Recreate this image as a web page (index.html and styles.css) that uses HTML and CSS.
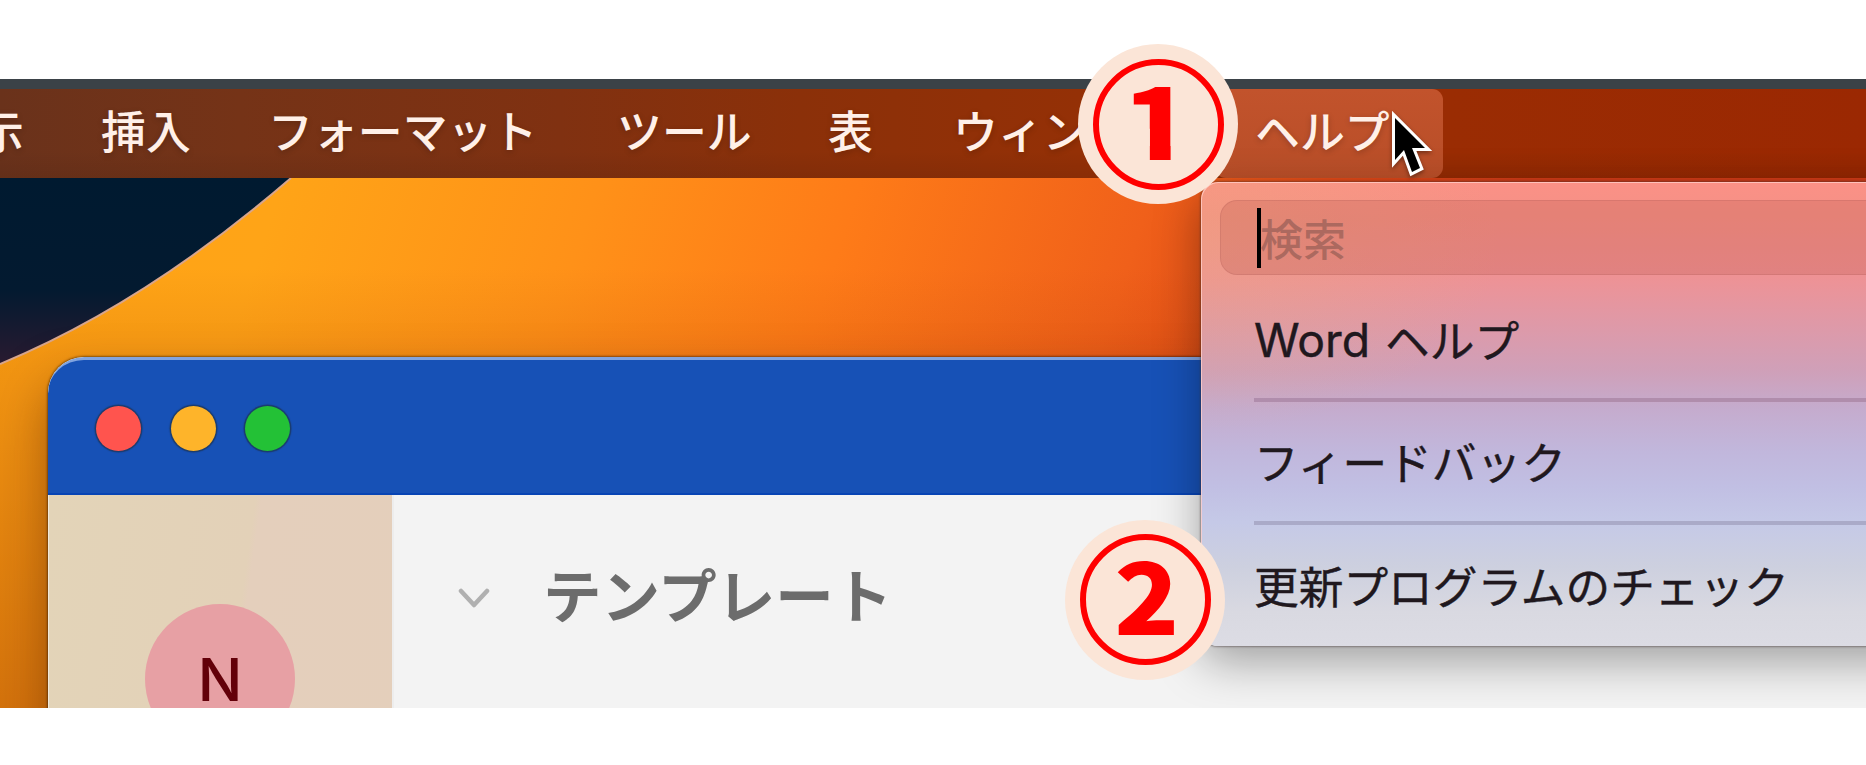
FILE: index.html
```html
<!DOCTYPE html>
<html lang="ja">
<head>
<meta charset="utf-8">
<title>Word ヘルプ</title>
<link rel="stylesheet" href="styles.css">
</head>
<body>
<main class="screen">
  <div class="bezel"></div>
  <nav class="menubar">
    <span class="item item-view">示</span>
    <span class="item item-insert">挿入</span>
    <span class="item item-format">フォーマット</span>
    <span class="item item-tools">ツール</span>
    <span class="item item-table">表</span>
    <span class="item item-window">ウィンドウ</span>
    <span class="item item-help">ヘルプ</span>
  </nav>
  <section class="desktop">
    <svg class="wallpaper" width="1866" height="530" viewBox="0 0 1866 530">
      <defs>
        <linearGradient id="night" x1="0" y1="0" x2="0" y2="186" gradientUnits="userSpaceOnUse">
          <stop offset="0" stop-color="#001a30"/><stop offset=".6" stop-color="#031a30"/><stop offset="1" stop-color="#291a30"/>
        </linearGradient>
      </defs>
      <path d="M0 0H291Q145 126 0 186Z" fill="url(#night)"/>
      <path d="M291 0Q145 126 0 186" fill="none" stroke="#d8a58c" stroke-width="2"/>
    </svg>
    <article class="window">
      <header class="titlebar">
        <i class="light red"></i><i class="light yellow"></i><i class="light green"></i>
      </header>
      <div class="content">
        <aside class="sidebar"><div class="avatar">N</div></aside>
        <div class="pane">
          <svg class="chevron" width="32" height="22" viewBox="0 0 32 22"><path d="M3 3L16 17L29 3" fill="none" stroke="#b0b0b0" stroke-width="4.5" stroke-linecap="round" stroke-linejoin="round"/></svg>
          <h1 class="heading">テンプレート</h1>
        </div>
      </div>
    </article>
  </section>
  <div class="help-menu">
    <div class="search"><i class="caret"></i><span class="placeholder">検索</span></div>
    <div class="entry entry-word"><span class="latin">Word</span>ヘルプ</div>
    <hr class="rule rule-warm">
    <div class="entry entry-feedback">フィードバック</div>
    <hr class="rule">
    <div class="entry entry-update">更新プログラムのチェック</div>
  </div>
</main>
<svg class="pointer" width="56" height="82" viewBox="0 0 56 82">
  <path d="M9 15V57L18 47L26 69L34 65L26 45H39Z" fill="#000" stroke="#fff" stroke-width="6" paint-order="stroke"/>
</svg>
<div class="badge badge-one"><div class="ring"><span class="digit">1</span></div></div>
<div class="badge badge-two"><div class="ring"><span class="digit">2</span></div></div>
</body>
</html>
```
FILE: styles.css
```css
* { box-sizing: border-box; }
body {
  position: relative;
  width: 1866px;
  height: 765px;
  margin: 0;
  padding-top: 79px;
  overflow: hidden;
  background: #fff;
  font-family: "Noto Sans CJK JP", sans-serif;
}
.screen { position: relative; height: 629px; overflow: hidden; }
.bezel { height: 10px; background: #3b4247; }
.menubar {
  display: flex;
  height: 89px;
  background:
    linear-gradient(180deg, rgba(0,0,0,0) 70%, rgba(0,0,0,.07)),
    linear-gradient(90deg, #6a321b 0, #753317 240px, #803111 560px, #8b3009 800px, #943006 1080px, #9a2c03 1450px, #9b2802 1866px);
  color: #fff0e8;
  font-size: 44.9px;
  font-weight: 500;
  line-height: 81px;
  text-shadow: 0 2px 6px rgba(0,0,0,.2);
  white-space: nowrap;
}
.item { flex: none; }
.item-view { width: 101px; margin-left: -21px; }
.item-insert { width: 167px; margin-left: 21px; }
.item-format { width: 349px; }
.item-tools { width: 211px; }
.item-table { width: 125px; }
.item-window { width: 262px; }
.item-help {
  width: 228px;
  padding-left: 40px;
  border-radius: 11px;
  background: linear-gradient(180deg, #c2532c, #b84e28);
}
.desktop {
  position: relative;
  height: 530px;
  background:
    linear-gradient(180deg, rgba(160,55,0,0) 90px, rgba(160,55,0,.13) 180px, rgba(160,55,0,.45) 530px),
    linear-gradient(108deg, #ffa414 0, #ffa417 270px, #ff9118 570px, #fe7b18 820px, #f0601a 1100px, #df4917 1260px, #cd3a16 1450px);
}
.wallpaper { display: block; }
.window {
  position: absolute;
  top: 179px;
  left: 48px;
  width: 1900px;
  height: 500px;
  overflow: hidden;
  border-radius: 36px 0 0 0;
  background: #f3f3f3;
  box-shadow: 0 0 2px 1px rgba(40,20,0,.5), 0 26px 50px rgba(90,35,0,.5);
}
.titlebar {
  display: flex;
  gap: 29.5px;
  height: 138px;
  padding: 46px 0 0 48px;
  border-top: 3px solid #82a4df;
  border-bottom: 2px solid #0844b4;
  border-radius: 36px 0 0 0;
  background: #1751b6;
}
.light {
  width: 45px;
  height: 45px;
  border-radius: 50%;
  box-shadow: 0 0 1px 1.5px rgba(30,45,60,.6);
}
.red { background: #ff544e; }
.yellow { background: #feb42a; }
.green { background: #23c136; }
.content { display: flex; height: 362px; }
.sidebar {
  width: 344px;
  padding: 109px 0 0 96px;
  border-left: 1px solid #f0e8da;
  background: linear-gradient(98deg, #e3d4b8 0, #e3d1b8 205px, #e4cfbc 211px, #e4cfbb 100%);
}
.avatar {
  width: 150px;
  height: 150px;
  border-radius: 50%;
  background: #e7a0a4;
  color: #630009;
  font: 500 59px/152px Inter, sans-serif;
  text-align: center;
}
.pane { display: flex; flex: 1; padding: 60px 0 0 64px; border-left: 2px solid #ededed; }
.chevron { margin-top: 33px; }
.heading {
  margin: -2px 0 0 53px;
  color: #6c6c6c;
  font-size: 58.5px;
  font-weight: 700;
  line-height: 80px;
}
.help-menu {
  position: absolute;
  top: 103px;
  left: 1201px;
  width: 760px;
  height: 464px;
  padding: 18px 19px;
  border-radius: 17px;
  background:
    radial-gradient(ellipse 300px 190px at 0 60px, rgba(235,175,120,.32), rgba(235,160,120,0)),
    linear-gradient(180deg, #fb9186 0, #f49086 35px, #ee9295 95px, #e198a5 135px, #cfa0b9 190px, #c5abcd 225px, #c1b7dc 270px, #c1bfe3 305px, #c5c9e7 340px, #cdd0df 385px, #d9d9e1 430px, #dcdce4 464px);
  box-shadow: inset 1px 1px 0 rgba(255,205,200,.8), 0 0 2px 1px rgba(60,45,45,.45), 0 16px 46px rgba(0,0,0,.34);
  color: #20181e;
  font-size: 44.7px;
  white-space: nowrap;
}
.search {
  display: flex;
  height: 75px;
  padding: 7px 0 0 36px;
  border: 1px solid rgba(170,85,80,.22);
  border-radius: 17px;
  background: rgba(182,82,70,.25);
}
.caret { width: 4px; height: 60px; background: #000; }
.placeholder { margin-left: -1px; color: #ac695f; font-size: 43px; font-weight: 500; line-height: 59px; }
.entry { padding-left: 34px; line-height: 66px; -webkit-text-stroke: .4px currentColor; }
.entry-word { display: flex; height: 123px; padding-top: 31px; }
.latin { margin: 1px 15px 0 0; font-family: Inter, sans-serif; font-size: 46.3px; font-weight: 400; }
.entry-feedback { height: 119px; padding-top: 26px; }
.entry-update { padding-top: 27px; }
.rule { height: 4px; margin: 0 0 0 34px; border: 0; background: #aaaac8; }
.rule-warm { background: #b08dac; }
.pointer {
  position: absolute;
  top: 103px;
  left: 1386px;
  filter: drop-shadow(0 2px 2px rgba(0,0,0,.4));
}
.badge {
  position: absolute;
  display: grid;
  place-items: center;
  width: 160px;
  height: 160px;
  border-radius: 50%;
  background: #fbe5d7;
}
.badge-one { top: 44px; left: 1078px; }
.badge-two { top: 520px; left: 1065px; }
.ring {
  display: grid;
  place-items: center;
  width: 131px;
  height: 131px;
  border: 6px solid #f00;
  border-radius: 50%;
}
.badge-two .ring { margin-bottom: 2px; }
.digit {
  color: #f00;
  font-size: 98px;
  font-weight: 900;
  line-height: 1.19;
}
.badge-one .digit {
  transform: translate(0, -7px) scaleX(1.19);
  clip-path: polygon(0 0, .414em 0, .414em 100%, .236em 100%, .236em 60%, 0 60%);
}
.badge-two .digit { transform: translate(2px, -7px) scaleX(1.09); }
```
